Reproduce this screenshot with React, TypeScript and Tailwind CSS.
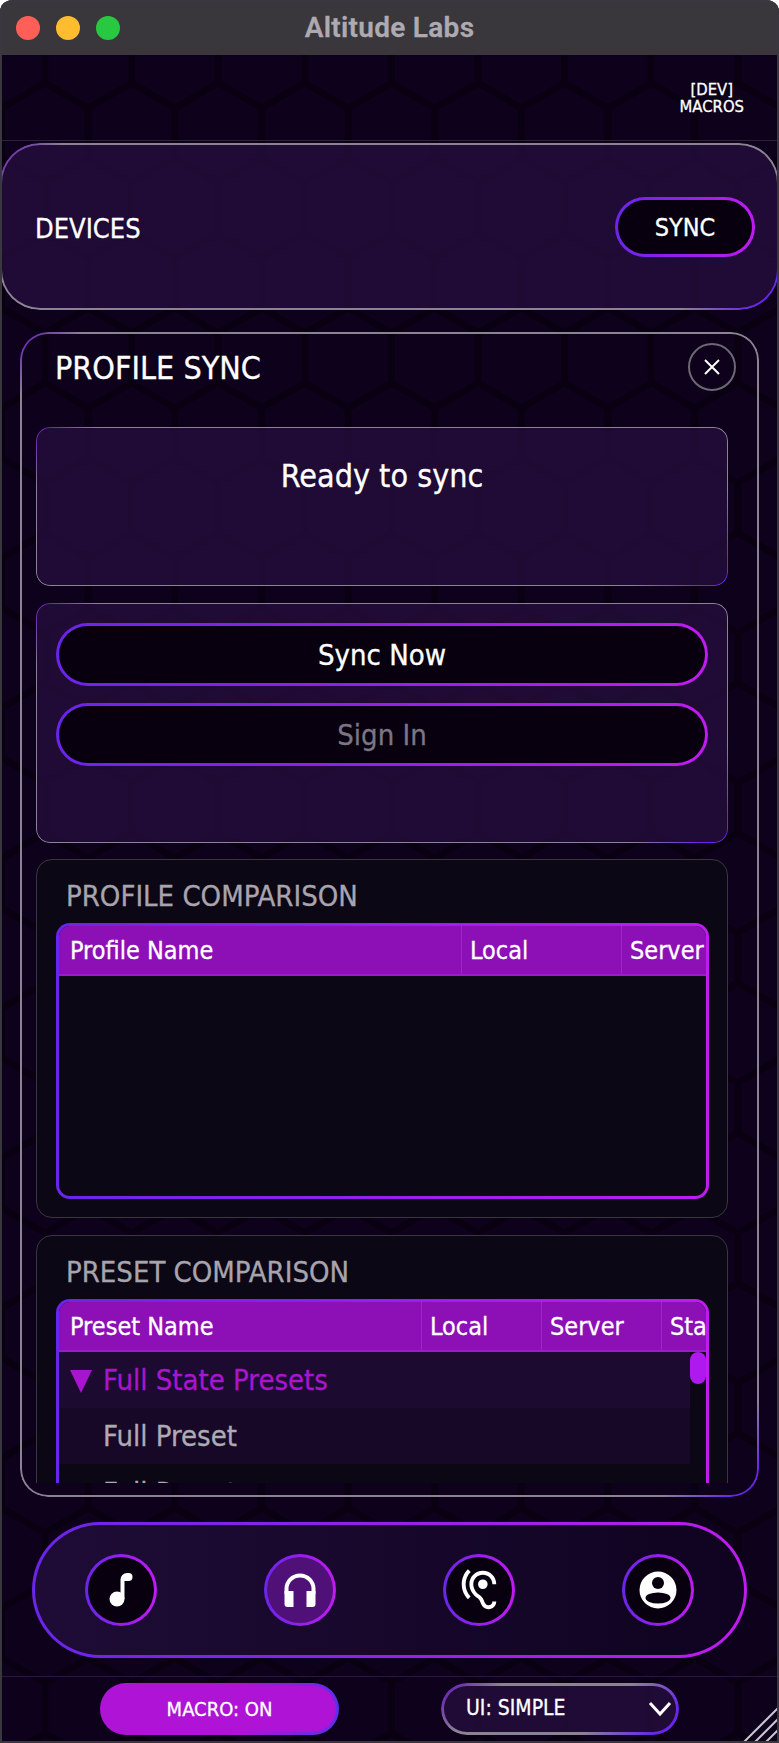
import { MdHearing } from "react-icons/md";

const font = "font-['DejaVu_Sans_Condensed','DejaVu_Sans',sans-serif]";

// translucent panels with a thin gradient edge, the honeycomb shows through them
const glassEdge =
  "before:content-[''] before:absolute before:inset-0 before:rounded-[inherit] before:pointer-events-none before:bg-[linear-gradient(135deg,#6a2bb0_10px,#8a8492_45px,#8a8492_calc(100%_-_70px),#6a25ea_calc(100%_-_20px))] before:[mask:linear-gradient(#000_0_0)_content-box_exclude,linear-gradient(#000_0_0)]";

const neon =
  "border-[3px] border-transparent [background:linear-gradient(#08000f,#08000f)_padding-box,linear-gradient(90deg,#6a25ea,#c01bf0)_border-box]";

const tableEdge =
  "border-[3px] border-transparent [background:linear-gradient(#0c0714,#0c0714)_padding-box,linear-gradient(90deg,#6a25ea,#c01bf0)_border-box]";

const Hexes = () => (
  <svg className="absolute inset-0 w-full h-full pointer-events-none" aria-hidden="true">
    <defs>
      <pattern id="hex" x="1.7" y="33" width="86.6" height="150" patternUnits="userSpaceOnUse">
        <path
          d="M43.3 0V50L0 75V125L43.3 150M43.3 50L86.6 75V125L43.3 150"
          fill="none"
          stroke="#090012"
          strokeWidth="7"
        />
      </pattern>
    </defs>
    <rect width="100%" height="100%" fill="url(#hex)" />
  </svg>
);

const NoteIcon = () => (
  <svg width="24" height="36" viewBox="0 0 24 36" fill="#fff">
    <circle cx="8" cy="27" r="7.500" />
    <path d="M11.500 27V7.500A6.500 6.500 0 0 1 18 1h1.500a4 4 0 0 1 0 8H15.500V27z" />
  </svg>
);

const HeadphonesIcon = () => (
  <svg width="34" height="36" viewBox="0 0 34 36" fill="none">
    <path d="M3.500 22V17a13.500 13.500 0 0 1 27 0v5" stroke="#fff" strokeWidth="4" />
    <path d="M1.500 19h9v16h-6a3 3 0 0 1-3-3zM32.500 19h-9v16h6a3 3 0 0 0 3-3z" fill="#fff" />
  </svg>
);

const AccountIcon = () => (
  <svg width="38" height="38" viewBox="0 0 38 38">
    <circle cx="19" cy="19" r="18.500" fill="#fff" />
    <circle cx="19" cy="12" r="6" fill="#08000f" />
    <ellipse cx="19" cy="27" rx="12.500" ry="5.500" fill="#08000f" />
  </svg>
);

const NavButton = ({ active, children }: { active?: boolean; children: React.ReactNode }) => (
  <div
    className={
      active
        ? "w-[72px] h-[72px] rounded-full flex items-center justify-center border-[3px] border-transparent [background:linear-gradient(#4f1078,#4f1078)_padding-box,linear-gradient(90deg,#6a25ea,#c01bf0)_border-box]"
        : `w-[72px] h-[72px] rounded-full flex items-center justify-center ${neon}`
    }
  >
    {children}
  </div>
);

const HeaderCell = ({ className, children }: { className: string; children: React.ReactNode }) => (
  <div className={`h-full flex items-center pt-[2px] whitespace-nowrap overflow-hidden border-r border-[#a024c8] ${className}`}>
    {children}
  </div>
);

const Section = ({ title, className, children }: { title: string; className: string; children: React.ReactNode }) => (
  <section className={`pl-[19px] pr-[18px] rounded-[16px] border border-[#3a3640] bg-[#0c0714] ${className}`}>
    <h3 className="text-[29px] leading-[30px] pt-[21px] pl-[10px] text-[#a8a4ae]">{title}</h3>
    {children}
  </section>
);

export default function App() {
  return (
    <div className={`relative w-[779px] h-[1743px] overflow-hidden rounded-t-[12px] bg-[#0e011c] text-white flex flex-col [-webkit-text-stroke:0.3px] ${font}`}>
      <Hexes />

      <header className="relative h-[55px] shrink-0 bg-[#39373b] border-t border-[#6b6870] rounded-t-[12px] flex items-center justify-center">
        <div className="absolute left-[16px] top-[15px] flex gap-[16px]">
          <span className="w-[24px] h-[24px] rounded-full bg-[#ff5f57]" />
          <span className="w-[24px] h-[24px] rounded-full bg-[#febc2e]" />
          <span className="w-[24px] h-[24px] rounded-full bg-[#28c840]" />
        </div>
        <span className="font-['Roboto',sans-serif] font-semibold text-[28px] tracking-[0.3px] text-[#aeaab2]">Altitude Labs</span>
      </header>

      <div className="relative h-[86px] shrink-0 border-b border-[#2a2533] flex items-center justify-end pr-[35px]">
        <div className="text-center text-[16.5px] leading-[17px]">
          [DEV]
          <br />
          MACROS
        </div>
      </div>

      <section className={`relative mt-[2px] h-[167px] shrink-0 rounded-[40px] bg-[#2d1048]/60 flex items-center justify-between pl-[35px] pr-[24px] before:p-[2px] ${glassEdge}`}>
        <h2 className="text-[27px] pt-[5px]">DEVICES</h2>
        <button className={`w-[140px] h-[60px] rounded-full text-[25px] pt-[2px] ${neon}`}>SYNC</button>
      </section>

      <main className={`relative mt-[22px] mx-[20px] h-[1165px] shrink-0 rounded-[28px] before:p-[2px] ${glassEdge}`}>
        <button className="absolute right-[23px] top-[11px] w-[48px] h-[48px] rounded-full border-2 border-[#6c6873] flex items-center justify-center">
          <svg width="18" height="18" viewBox="0 0 18 18" stroke="#fff" strokeWidth="2">
            <path d="M2 2l14 14M16 2L2 16" />
          </svg>
        </button>
        <div className="ml-[16px] mr-[31px] mt-[2px] h-[1149px] overflow-hidden">
          <div className="h-[93px] flex items-center pl-[19px] pb-[26px]">
            <h2 className="text-[32px]">PROFILE SYNC</h2>
          </div>

          <div className={`relative h-[159px] rounded-[14px] bg-[#2d1048]/60 pt-[30px] text-center text-[32px] leading-[38px] before:p-[1px] ${glassEdge}`}>
            Ready to sync
          </div>

          <div className={`relative mt-[17px] h-[240px] rounded-[14px] bg-[#2d1048]/60 px-[20px] pt-[20px] flex flex-col gap-[17px] before:p-[1px] ${glassEdge}`}>
            <button className={`h-[63px] shrink-0 rounded-full text-[29px] pt-[2px] ${neon}`}>Sync Now</button>
            <button className={`h-[63px] shrink-0 rounded-full text-[29px] pt-[2px] text-[#7b7683] ${neon}`}>Sign In</button>
          </div>

          <Section title="PROFILE COMPARISON" className="mt-[16px] h-[359px]">
            <div className={`mt-[12px] h-[276px] rounded-[14px] overflow-hidden ${tableEdge}`}>
              <div className="h-[50px] flex text-[25px] bg-[#8c10b5] border-b-[2px] border-[#a018d0]">
                <HeaderCell className="w-[403px] pl-[11px]">Profile Name</HeaderCell>
                <HeaderCell className="w-[160px] pl-[8px]">Local</HeaderCell>
                <div className="h-full flex items-center pl-[8px] pt-[2px] whitespace-nowrap overflow-hidden flex-1">Server</div>
              </div>
            </div>
          </Section>

          <Section title="PRESET COMPARISON" className="mt-[17px] h-[300px]">
            <div className={`mt-[12px] h-[300px] rounded-t-[14px] overflow-hidden border-b-0 ${tableEdge}`}>
              <div className="h-[50px] flex text-[25px] bg-[#8c10b5] border-b-[2px] border-[#a018d0]">
                <HeaderCell className="w-[363px] pl-[11px]">Preset Name</HeaderCell>
                <HeaderCell className="w-[120px] pl-[8px]">Local</HeaderCell>
                <HeaderCell className="w-[120px] pl-[8px]">Server</HeaderCell>
                <div className="h-full flex items-center pl-[8px] pt-[2px] whitespace-nowrap overflow-hidden flex-1">Status</div>
              </div>
              <div className="relative pr-[16px]">
                <div className="h-[56px] flex items-center gap-[10px] pl-[10px] pt-[1px] text-[29px] text-[#a815d0] bg-[#1c0a30]">
                  <svg width="24" height="24" viewBox="0 0 24 24" fill="#a815d0">
                    <path d="M1 1h22L12 24z" />
                  </svg>
                  Full State Presets
                </div>
                <div className="h-[56px] flex items-center pl-[44px] pt-[1px] text-[29px] text-[#aeaab4] bg-[#180828]">Full Preset</div>
                <div className="h-[62px] pt-[8px] pl-[44px] text-[29px] text-[#aeaab4]">Full Preset</div>
                <div className="absolute right-0 top-0 bottom-0 w-[16px] bg-[#0c0714]">
                  <div className="h-[32px] rounded-full bg-[#b018f0]" />
                </div>
              </div>
            </div>
          </Section>
        </div>
      </main>

      <nav className="relative mt-[25px] mx-[32px] h-[136px] shrink-0 rounded-full border-[3px] border-transparent [background:linear-gradient(90deg,#1e0c36,#0f0320)_padding-box,linear-gradient(90deg,#6a25ea,#c01bf0)_border-box] flex items-center justify-between pl-[50px] pr-[50px]">
        <NavButton><NoteIcon /></NavButton>
        <NavButton active><HeadphonesIcon /></NavButton>
        <NavButton><MdHearing size={46} color="#fff" /></NavButton>
        <NavButton><AccountIcon /></NavButton>
      </nav>

      <footer className="relative mt-[18px] flex-1 border-t border-[#2a1640] flex items-start pt-[6px] pl-[100px] gap-[102px]">
        <button className="w-[239px] h-[52px] rounded-full text-[20px] border-[3px] border-transparent [background:linear-gradient(#ae13d6,#ae13d6)_padding-box,linear-gradient(90deg,#ae13d6_60%,#5a30e8)_border-box]">
          MACRO: ON
        </button>
        <div className={`relative w-[238px] h-[52px] rounded-full bg-[#2d1048]/60 flex items-center justify-between pl-[25px] pr-[7px] text-[21px] before:p-[3px] ${glassEdge}`}>
          UI: SIMPLE
          <svg width="24" height="16" viewBox="0 0 24 16" fill="none" stroke="#fff" strokeWidth="3">
            <path d="M2 2l10 11L22 2" />
          </svg>
        </div>
        <svg className="absolute right-0 bottom-0" width="36" height="36" viewBox="0 0 36 36" stroke="#c9c6cd" strokeWidth="2" fill="none">
          <path d="M0 36L36 0M11 36L36 11M22 36L36 22" />
        </svg>
      </footer>

      <div className="absolute inset-0 rounded-t-[12px] border-2 border-[#3b3741] pointer-events-none" />
    </div>
  );
}
